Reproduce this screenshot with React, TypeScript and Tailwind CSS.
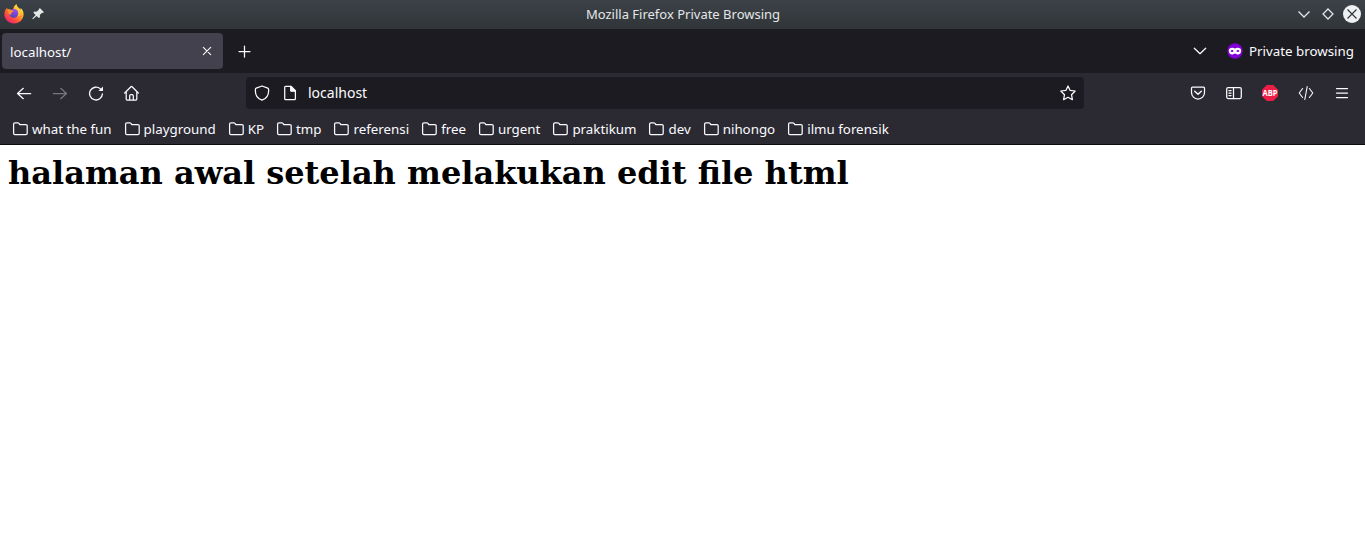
import type { ReactNode } from "react";

function Icon({ children, className = "" }: { children: ReactNode; className?: string }) {
  return (
    <svg
      viewBox="0 0 16 16"
      className={`h-4 w-4 shrink-0 ${className}`}
      fill="none"
      stroke="currentColor"
      strokeWidth="1.25"
      strokeLinecap="round"
      strokeLinejoin="round"
    >
      {children}
    </svg>
  );
}

function FirefoxLogo() {
  return (
    <svg viewBox="0 0 20 20" className="h-5 w-5 shrink-0">
      <defs>
        <linearGradient id="flame" x1="0.85" y1="0.1" x2="0.2" y2="0.95">
          <stop offset="0" stopColor="#fff44f" />
          <stop offset="0.35" stopColor="#ffa42b" />
          <stop offset="0.65" stopColor="#ff5a36" />
          <stop offset="1" stopColor="#f01d72" />
        </linearGradient>
        <linearGradient id="globe" x1="0.7" y1="0" x2="0.3" y2="1">
          <stop offset="0" stopColor="#a04cf5" />
          <stop offset="1" stopColor="#5140b8" />
        </linearGradient>
      </defs>
      <path
        d="M12.600 0c0 1.900 1 2.900 2.400 4.100.6.600 1 1.100 1.300 1.700l.5-1.800c1.900 1.700 2.900 4.100 2.800 6.500-.2 5-4.300 9-9.500 9C4.800 19.500.5 15.500.4 10.500.3 7.800 1.400 5.500 3 3.700l.9 2.200 5 .7c.3-2.800 1.400-5.300 3.700-6.600z"
        fill="url(#flame)"
      />
      <circle cx="9.800" cy="9.400" r="4.500" fill="url(#globe)" />
      <path d="M3.200 5l3 .2 1.500 1.200 2 .4c-.1 1.200-1.600 1.200-2.300 2-.5.7-.4 1.300.1 1.800-1.100.4-2.200 0-2.700-1z" fill="#ff9527" />
      <path d="M11 4.600c2 0 3.100 1.500 3.300 3.400.4 1.600.2 3.200-.8 4.600 3.600-1.300 4.200-4.700 1.800-7.400-1.200-1.100-2.200-2-2.600-3.300-.4 1-.9 1.900-1.700 2.700z" fill="#ffca38" />
    </svg>
  );
}

function Folder() {
  return (
    <Icon>
      <path d="M1.600 3.100c0-.8.500-1.300 1.300-1.300h2.900c.4 0 .7.100.9.400l1.100 1.300h6.100c.8 0 1.300.500 1.300 1.300v7.500c0 .8-.5 1.300-1.300 1.300h-11c-.8 0-1.300-.5-1.300-1.300z" />
    </Icon>
  );
}

const bookmarks = [
  "what the fun",
  "playground",
  "KP",
  "tmp",
  "referensi",
  "free",
  "urgent",
  "praktikum",
  "dev",
  "nihongo",
  "ilmu forensik",
];

function TitleBar() {
  return (
    <div className="flex h-[29px] items-center bg-gradient-to-b from-[#3d4248] to-[#2f3538] pb-px pl-1 pr-1 text-[#e4e6e7]">
      <div className="flex flex-1 items-center gap-1.5">
        <FirefoxLogo />
        <Icon>
          <path
            d="M10.100 2.300l3.900 3.900-1.200.7-.7-.2-2.300 2.300.2 2.200-1.200.900-2.200-2.200-3.700 3.300-.6-.6 3.300-3.700-2.200-2.200.9-1.200 2.200.2 2.500-2.300-.2-.7z"
            fill="currentColor"
            stroke="none"
          />
        </Icon>
      </div>
      <div className="pl-px text-[13px]">Mozilla Firefox Private Browsing</div>
      <div className="flex flex-1 items-center justify-end">
        <Icon className="mr-2">
          <path d="M2.500 5.500l5.500 5.500 5.500-5.500" strokeLinecap="butt" strokeLinejoin="miter" />
        </Icon>
        <Icon className="mr-[7px]">
          <path d="M8 3l5 5-5 5-5-5z" strokeLinejoin="miter" />
        </Icon>
        <svg viewBox="0 0 18 18" className="h-[18px] w-[18px]">
          <circle cx="9" cy="9" r="9" fill="#eff0f1" />
          <path d="M4.500 4.500l9 9m0-9l-9 9" stroke="#31363b" strokeWidth="1.2" />
        </svg>
      </div>
    </div>
  );
}

function TabBar() {
  return (
    <div className="flex h-11 items-center bg-[#1c1b22] pl-0.5 pr-[11px]">
      <div className="flex h-9 w-[221px] items-center justify-between rounded bg-[#42414d] pl-2 pr-2">
        <span className="pt-0.5">localhost/</span>
        <Icon>
          <path d="M4.300 4.300l7.400 7.400m0-7.400l-7.400 7.400" strokeWidth="1.100" />
        </Icon>
      </div>
      <Icon className="ml-[14px]">
        <path d="M7.500 3v11m-5.500-5.500h11" />
      </Icon>
      <div className="ml-auto flex items-center">
        <Icon>
          <path d="M2.300 5.200l5.700 5.500 5.700-5.500" />
        </Icon>
        <svg viewBox="0 0 16 16" className="ml-[19px] h-4 w-4">
          <circle cx="8" cy="8" r="7.700" fill="#8000d7" />
          <path
            d="M8 5.700c1.500-1.400 6.200-1.600 6.200 1.800 0 2.400-1.400 4-3.300 4-1.300 0-2-1.100-2.900-1.100s-1.600 1.100-2.900 1.100c-1.900 0-3.300-1.600-3.300-4 0-3.400 4.700-3.200 6.200-1.800z"
            fill="#fff"
          />
          <ellipse cx="5.100" cy="8" rx="1.400" ry="0.900" fill="#8000d7" />
          <ellipse cx="10.900" cy="8" rx="1.400" ry="0.900" fill="#8000d7" />
        </svg>
        <span className="ml-1.5">Private browsing</span>
      </div>
    </div>
  );
}

function NavBar() {
  return (
    <div className="flex h-10 items-center pl-4 pr-[15px]">
      <div className="flex w-[230px] shrink-0 items-center gap-5">
        <Icon>
          <path d="M14.700 8.500H1.500m5.800-5.200L1.500 8.500l5.800 5.200" />
        </Icon>
        <Icon className="text-[#77767e]">
          <path d="M1.300 8.500h13.200M8.700 3.300l5.800 5.200-5.800 5.200" />
        </Icon>
        <Icon>
          <path d="M12.300 3.800A6.400 6.400 0 1 0 14.400 8.900" strokeWidth="1.300" />
          <path d="M15 1.500v4.500h-4.500z" fill="currentColor" stroke="none" />
        </Icon>
        <Icon className="-ml-px">
          <path d="M1.700 8L7.900 1.800c.4-.4.8-.4 1.200 0L15.300 8M3.200 6.800v7.300c0 .5.300.9.900.9h8.800c.6 0 .9-.4.9-.9V6.800M6.700 15v-4.200c0-.7.500-1.200 1.200-1.200h1.200c.7 0 1.200.5 1.200 1.200V15" />
        </Icon>
      </div>
      <div className="flex h-8 w-[838px] shrink-0 items-center rounded bg-[#1c1b22] px-2">
        <Icon>
          <path d="M8 1L13.800 3.200c.5.200.8.500.8 1v2C14.600 10.500 11.800 13.800 8 15.200 4.200 13.800 1.400 10.500 1.400 6.200v-2c0-.5.300-.8.8-1z" />
        </Icon>
        <Icon className="ml-3">
          <path d="M2.700 2.300c0-.5.300-.9.900-.9h5.600l4.200 4.200v8.100c0 .5-.3.900-.9.900H3.600c-.6 0-.9-.4-.9-.9z" />
          <path d="M8.700 1.500v4.200c0 .3.200.5.500.5h4.200z" fill="currentColor" />
        </Icon>
        <span className="ml-2.5 text-sm">localhost</span>
        <Icon className="ml-auto">
          <path d="M8 1l2 4.300 5.200.7-3.700 3.700.900 5L8 12.300l-4.400 2.400.900-5L.8 6 6 5.300z" />
        </Icon>
      </div>
      <div className="ml-auto flex items-center gap-5">
        <Icon>
          <path d="M1.500 3c0-.6.400-1 1-1h11c.6 0 1 .4 1 1v4.500a6.500 6.500 0 0 1-13 0z" />
          <path d="M4.700 6.200L8 9.300l3.300-3.100" strokeWidth="1.400" />
        </Icon>
        <Icon>
          <rect x="0.700" y="2.500" width="14.600" height="11" rx="1.500" />
          <path d="M7.500 2.500v11M2.900 5.500h2.200M2.900 8h2.200M2.900 10.500h2.200" />
        </Icon>
        <div className="flex h-4 w-4 items-center justify-center bg-[#ed1e45] pb-px text-[9px] font-bold leading-none text-white [clip-path:polygon(30%_0,70%_0,100%_30%,100%_70%,70%_100%,30%_100%,0_70%,0_30%)]">
          <span className="scale-x-[.84]">ABP</span>
        </div>
        <Icon>
          <path d="M4.600 3.500L1.200 8l3.400 4.500M11.400 3.500L14.800 8l-3.400 4.500M9.200 1.500L6.800 14.500" strokeWidth="1.100" />
        </Icon>
        <Icon>
          <path d="M2.500 3.500h11m-11 4.500h11m-11 4.500h11" />
        </Icon>
      </div>
    </div>
  );
}

export default function App() {
  return (
    <div className="flex h-[538px] w-[1365px] flex-col overflow-hidden whitespace-nowrap bg-white font-['Noto_Sans',sans-serif] text-[13.333px] leading-5 text-[#fbfbfe]">
      <TitleBar />
      <TabBar />
      <div className="h-[72px] shrink-0 border-b border-[#0c0c0d] bg-[#2b2a33]">
        <NavBar />
        <div className="flex h-8 items-center gap-3 pl-3">
          {bookmarks.map((name) => (
            <div key={name} className="flex items-center gap-1">
              <Folder />
              <span>{name}</span>
            </div>
          ))}
        </div>
      </div>
      <main className="px-2 pt-[9px]">
        <h1 className="font-['DejaVu_Serif',serif] text-[32px] font-bold leading-[38px] text-black">
          halaman awal setelah melakukan edit file html
        </h1>
      </main>
    </div>
  );
}
